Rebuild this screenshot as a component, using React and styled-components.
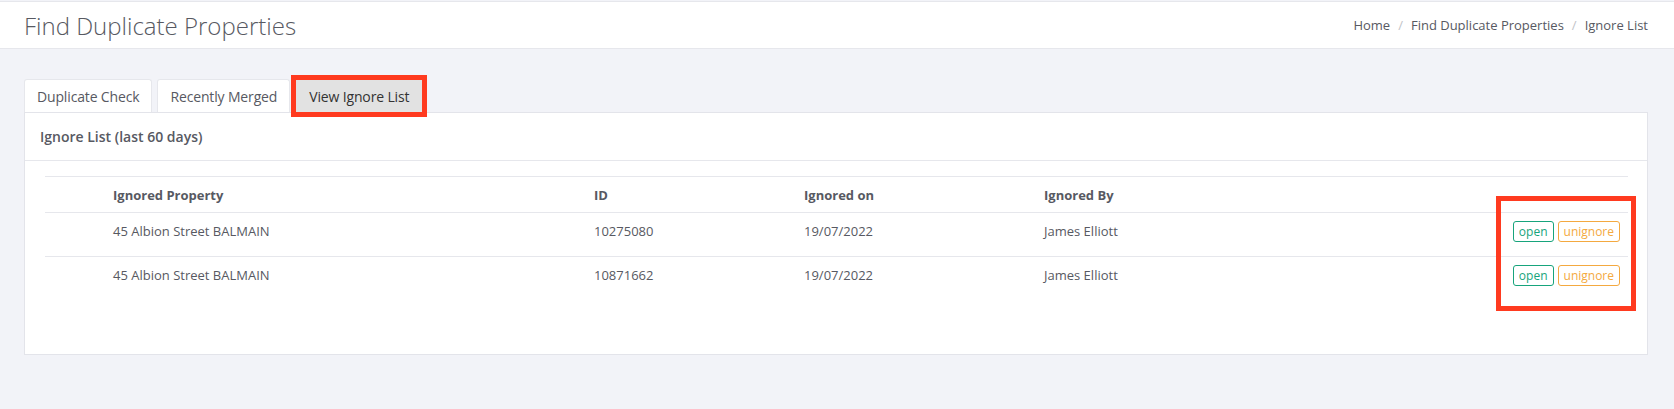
import React from 'react';
import styled, { createGlobalStyle } from 'styled-components';

const GlobalStyle = createGlobalStyle`
    body {
        margin: 0;
        background: #f2f3f8;
        font-family: "Open Sans", "Noto Sans", sans-serif;
        color: #575962;
    }
`

const TopBar = styled.header`
    margin-top: 1px;
    height: 46px;
    background: #fff;
    border-top: 1px solid #e6e7ec;
    border-bottom: 1px solid #e6e7ec;
    display: flex;
    align-items: center;
    justify-content: space-between;
    padding: 0 26px 0 24px;
`
const PageTitle = styled.h1`
    margin: 0;
    font-size: 24px;
    font-weight: 300;
    color: #575962;
    line-height: 1;
    padding-top: 2px;
`
const Crumbs = styled.nav`
    display: flex;
    align-items: center;
    font-size: 13px;
    color: #575962;
`
const Sep = styled.span`
    color: #c2c3c8;
    margin: 0 8px;
`

const Main = styled.main`
    padding: 30px 26px 0 24px;
`
const Tabs = styled.div`
    display: flex;
    gap: 5px;
    height: 33px;
`
const Tab = styled.div`
    display: flex;
    align-items: center;
    padding: 0 12px;
    font-size: 14px;
    letter-spacing: -0.15px;
    color: ${p => (p.$active ? '#333' : '#575962')};
    background: ${p => (p.$active ? '#e2e2e2' : '#fff')};
    border: 1px solid ${p => (p.$active ? '#e2e2e2' : '#e6e7ec')};
    border-bottom: none;
    border-radius: ${p => (p.$active ? '0' : '3px 3px 0 0')};
    position: relative;
    ${p => p.$active && `
        margin-left: 1px;
        padding-right: 13px;
        z-index: 1;
        &::after {
            content: '';
            position: absolute;
            top: -5px;
            left: -6px;
            right: -5px;
            bottom: -5px;
            border: 5px solid #ff3a1f;
            pointer-events: none;
        }
    `}
`

const Card = styled.section`
    background: #fff;
    border: 1px solid #e3e4ea;
`
const CardHead = styled.div`
    padding: 14px 15px 13px;
    line-height: 20px;
    font-size: 14px;
    font-weight: 600;
    color: #575962;
    border-bottom: 1px solid #e6e7ec;
`
const CardBody = styled.div`
    padding: 15px 19px 54px 20px;
`
const TableWrap = styled.div`
    position: relative;
`
const Table = styled.table`
    width: 100%;
    border-collapse: collapse;
    table-layout: fixed;
    font-size: 13px;
    color: #575962;
`
const Th = styled.th`
    text-align: left;
    font-weight: 700;
    padding: 8px 12px 7px;
    line-height: 20px;
    border-top: 1px solid #e6e7ec;
    border-bottom: 1px solid #e6e7ec;
`
const Td = styled.td`
    text-align: ${p => p.$align || 'left'};
    vertical-align: top;
    padding: 8px ${p => (p.$align === 'right' ? '8px' : '12px')} 14px 12px;
    line-height: 21px;
    border-bottom: ${p => (p.$last ? 'none' : '1px solid #e6e7ec')};
`
const Actions = styled.div`
    display: flex;
    justify-content: flex-end;
    gap: 4px;
`
const TagButton = styled.button`
    font-family: inherit;
    font-size: 12px;
    line-height: 17px;
    height: 21px;
    padding: 0 5px;
    background: #fff;
    border: 1px solid ${p => p.$color};
    color: ${p => p.$color};
    border-radius: 3px;
    cursor: pointer;
`
const Highlight = styled.div`
    position: absolute;
    top: 20px;
    right: -8px;
    width: 140px;
    height: 115px;
    box-sizing: border-box;
    border: 5px solid #ff3a1f;
    pointer-events: none;
`

const rows = [
    { property: '45 Albion Street BALMAIN', id: '10275080', on: '19/07/2022', by: 'James Elliott' },
    { property: '45 Albion Street BALMAIN', id: '10871662', on: '19/07/2022', by: 'James Elliott' },
]

const App = () => (
    <>
        <GlobalStyle />
        <TopBar>
            <PageTitle>Find Duplicate Properties</PageTitle>
            <Crumbs>
                <span>Home</span>
                <Sep>/</Sep>
                <span>Find Duplicate Properties</span>
                <Sep>/</Sep>
                <span>Ignore List</span>
            </Crumbs>
        </TopBar>
        <Main>
            <Tabs>
                <Tab>Duplicate Check</Tab>
                <Tab>Recently Merged</Tab>
                <Tab $active>View Ignore List</Tab>
            </Tabs>
            <Card>
                <CardHead>Ignore List (last 60 days)</CardHead>
                <CardBody>
                    <TableWrap>
                        <Table>
                            <colgroup>
                                <col style={{ width: 56 }} />
                                <col style={{ width: 481 }} />
                                <col style={{ width: 210 }} />
                                <col style={{ width: 240 }} />
                                <col />
                                <col style={{ width: 140 }} />
                            </colgroup>
                            <thead>
                                <tr>
                                    <Th />
                                    <Th>Ignored Property</Th>
                                    <Th>ID</Th>
                                    <Th>Ignored on</Th>
                                    <Th>Ignored By</Th>
                                    <Th />
                                </tr>
                            </thead>
                            <tbody>
                                {rows.map((r, i) => {
                                    const last = i === rows.length - 1;
                                    return (
                                        <tr key={r.id}>
                                            <Td $last={last} />
                                            <Td $last={last}>{r.property}</Td>
                                            <Td $last={last}>{r.id}</Td>
                                            <Td $last={last}>{r.on}</Td>
                                            <Td $last={last}>{r.by}</Td>
                                            <Td $last={last} $align="right">
                                                <Actions>
                                                    <TagButton $color="#17a47c">open</TagButton>
                                                    <TagButton $color="#f4a940">unignore</TagButton>
                                                </Actions>
                                            </Td>
                                        </tr>
                                    );
                                })}
                            </tbody>
                        </Table>
                        <Highlight />
                    </TableWrap>
                </CardBody>
            </Card>
        </Main>
    </>
)

export default App;
